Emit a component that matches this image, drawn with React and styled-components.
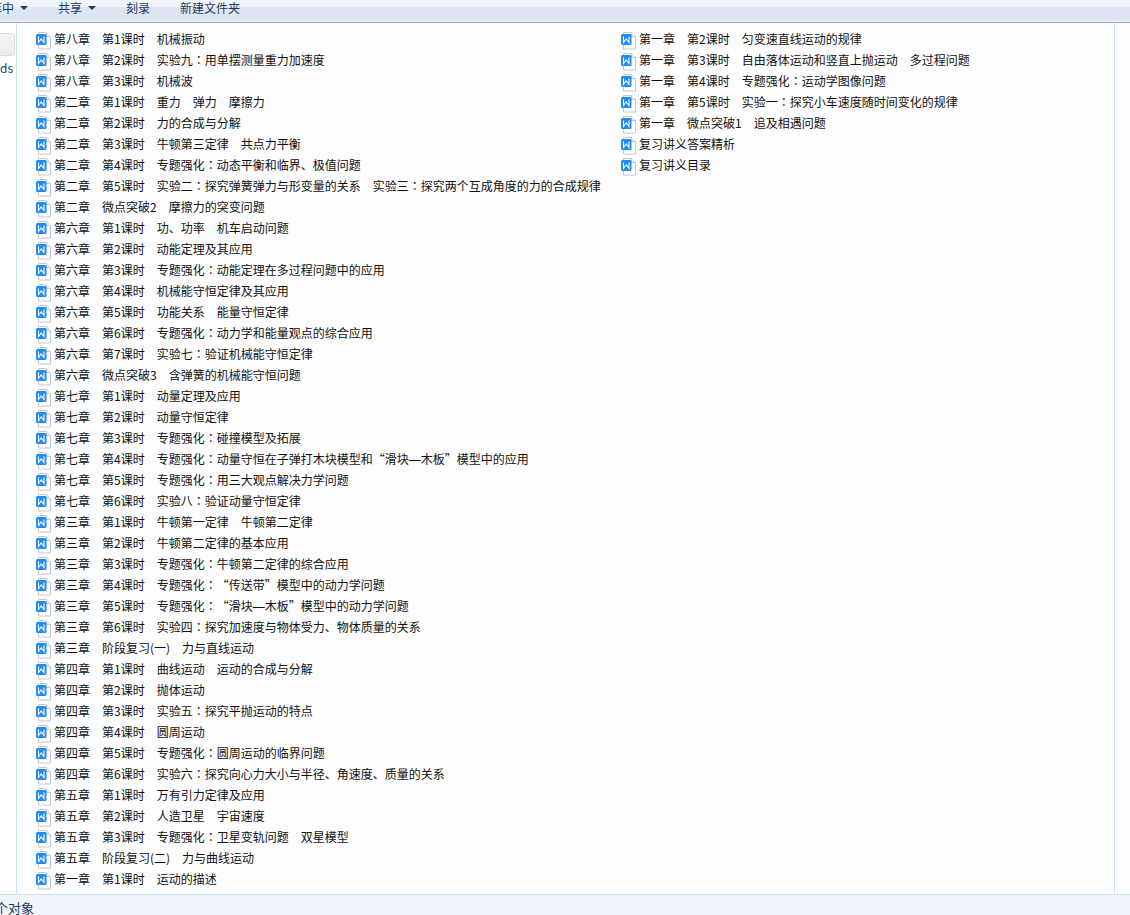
import styled, { createGlobalStyle } from "styled-components";

const GlobalStyle = createGlobalStyle`
  html, body {
    margin: 0;
    padding: 0;
    height: 100%;
    overflow: hidden;
    background: #fff;
    font-family: "Noto Sans CJK SC", "Liberation Sans", sans-serif;
  }
`;

const Window = styled.div`
  width: 1130px;
  height: 915px;
  display: flex;
  flex-direction: column;
  overflow: hidden;
  color: #111;
  font-size: 12px;
  text-spacing-trim: space-all;
`;

const Toolbar = styled.div`
  height: 23px;
  flex: none;
  display: flex;
  align-items: flex-start;
  padding-top: 1px;
  box-sizing: border-box;
  overflow: hidden;
  background: linear-gradient(#f1f6fc 0, #f1f6fc 7px, #dde6f2 7px, #dce6f2 20px, #e9f0f8 21px);
  border-bottom: 1px solid #a0aec2;
  color: #1e395b;
`;

const ToolItem = styled.div`
  display: flex;
  align-items: center;
  gap: 6px;
  height: 14px;
  line-height: 14px;
  white-space: nowrap;
  margin-left: ${(props) => props.$left}px;
`;

const Caret = styled.span`
  width: 0;
  height: 0;
  border-left: 4px solid transparent;
  border-right: 4px solid transparent;
  border-top: 4px solid #1e395b;
`;

const Body = styled.div`
  flex: 1;
  min-height: 0;
  display: flex;
  background: #fdfdfd;
`;

const Sidebar = styled.div`
  width: 16px;
  flex: none;
  display: flex;
  flex-direction: column;
  align-items: flex-end;
  padding-top: 10px;
  overflow: hidden;
  background: #fff;
  border-right: 1px solid #cfe2f6;
`;

const SideButton = styled.div`
  width: 30px;
  height: 23px;
  flex: none;
  margin-right: 1px;
  box-sizing: border-box;
  background: linear-gradient(#f4f4f4, #ececec);
  border: 1px solid #dcdcdc;
  border-radius: 3px;
`;

const SideLabel = styled.div`
  margin-top: 4px;
  line-height: 16px;
  white-space: nowrap;
  margin-right: 3px;
  color: #1e395b;
`;

const Content = styled.div`
  flex: 1;
  min-width: 0;
  display: grid;
  grid-auto-flow: column;
  grid-template-rows: repeat(41, 21px);
  grid-auto-columns: 585px;
  align-content: start;
  padding: 5px 0 0 19px;
`;

const FileRow = styled.div`
  display: flex;
  align-items: flex-start;
  gap: 3px;
  height: 21px;
  white-space: nowrap;
`;

const FileName = styled.span`
  line-height: 21px;
`;

const Colon = styled.span`
  font-family: "Noto Sans CJK TC", sans-serif;
`;

const Dash = styled.span`
  font-family: "Liberation Sans", sans-serif;
`;

const RightRail = styled.div`
  width: 15px;
  flex: none;
  background: #fdfdfd;
  border-left: 1px solid #cfe2f6;
`;

const StatusBar = styled.div`
  height: 20px;
  flex: none;
  display: flex;
  align-items: flex-start;
  overflow: hidden;
  background: #f1f5fc;
  border-top: 1px solid #d3deee;
  color: #1e395b;
  font-size: 13px;
`;

const StatusText = styled.span`
  margin: 3px 0 0 -5px;
  white-space: nowrap;
  line-height: 20px;
`;

const IconSvg = styled.svg`
  flex: none;
  margin-top: 4px;
`;

const WordIcon = () => (
  <IconSvg width="15" height="18" viewBox="0 0 15 18">
    <path d="M2.500.500h8l4 4v12.500h-12z" fill="#fff" stroke="#c2c8d2" />
    <path d="M10.500.500v4h4" fill="#f1f3f6" stroke="#c2c8d2" />
    <rect x="0" y="2" width="10.500" height="11" rx="1.500" fill="#1e8cf2" />
    <path d="M2.500 4.500v6l2.700-3.500 2.800 3.500v-6" fill="none" stroke="#fff" strokeWidth="1.100" />
  </IconSvg>
);

const files = [
  "第八章　第1课时　机械振动",
  "第八章　第2课时　实验九：用单摆测量重力加速度",
  "第八章　第3课时　机械波",
  "第二章　第1课时　重力　弹力　摩擦力",
  "第二章　第2课时　力的合成与分解",
  "第二章　第3课时　牛顿第三定律　共点力平衡",
  "第二章　第4课时　专题强化：动态平衡和临界、极值问题",
  "第二章　第5课时　实验二：探究弹簧弹力与形变量的关系　实验三：探究两个互成角度的力的合成规律",
  "第二章　微点突破2　摩擦力的突变问题",
  "第六章　第1课时　功、功率　机车启动问题",
  "第六章　第2课时　动能定理及其应用",
  "第六章　第3课时　专题强化：动能定理在多过程问题中的应用",
  "第六章　第4课时　机械能守恒定律及其应用",
  "第六章　第5课时　功能关系　能量守恒定律",
  "第六章　第6课时　专题强化：动力学和能量观点的综合应用",
  "第六章　第7课时　实验七：验证机械能守恒定律",
  "第六章　微点突破3　含弹簧的机械能守恒问题",
  "第七章　第1课时　动量定理及应用",
  "第七章　第2课时　动量守恒定律",
  "第七章　第3课时　专题强化：碰撞模型及拓展",
  "第七章　第4课时　专题强化：动量守恒在子弹打木块模型和“滑块—木板”模型中的应用",
  "第七章　第5课时　专题强化：用三大观点解决力学问题",
  "第七章　第6课时　实验八：验证动量守恒定律",
  "第三章　第1课时　牛顿第一定律　牛顿第二定律",
  "第三章　第2课时　牛顿第二定律的基本应用",
  "第三章　第3课时　专题强化：牛顿第二定律的综合应用",
  "第三章　第4课时　专题强化：“传送带”模型中的动力学问题",
  "第三章　第5课时　专题强化：“滑块—木板”模型中的动力学问题",
  "第三章　第6课时　实验四：探究加速度与物体受力、物体质量的关系",
  "第三章　阶段复习(一)　力与直线运动",
  "第四章　第1课时　曲线运动　运动的合成与分解",
  "第四章　第2课时　抛体运动",
  "第四章　第3课时　实验五：探究平抛运动的特点",
  "第四章　第4课时　圆周运动",
  "第四章　第5课时　专题强化：圆周运动的临界问题",
  "第四章　第6课时　实验六：探究向心力大小与半径、角速度、质量的关系",
  "第五章　第1课时　万有引力定律及应用",
  "第五章　第2课时　人造卫星　宇宙速度",
  "第五章　第3课时　专题强化：卫星变轨问题　双星模型",
  "第五章　阶段复习(二)　力与曲线运动",
  "第一章　第1课时　运动的描述",
  "第一章　第2课时　匀变速直线运动的规律",
  "第一章　第3课时　自由落体运动和竖直上抛运动　多过程问题",
  "第一章　第4课时　专题强化：运动学图像问题",
  "第一章　第5课时　实验一：探究小车速度随时间变化的规律",
  "第一章　微点突破1　追及相遇问题",
  "复习讲义答案精析",
  "复习讲义目录",
];

// the colon sits centred and the dash runs full width in the original
const renderName = (name) =>
  name.split(/([：—])/).map((part, i) => {
    if (part === "：") return <Colon key={i}>{part}</Colon>;
    if (part === "—") return <Dash key={i}>{part}</Dash>;
    return part;
  });

export default function App() {
  return (
    <Window>
      <GlobalStyle />
      <Toolbar>
        <ToolItem $left={-10}>
          库中
          <Caret />
        </ToolItem>
        <ToolItem $left={30}>
          共享
          <Caret />
        </ToolItem>
        <ToolItem $left={30}>刻录</ToolItem>
        <ToolItem $left={30}>新建文件夹</ToolItem>
      </Toolbar>
      <Body>
        <Sidebar>
          <SideButton />
          <SideLabel>ds</SideLabel>
        </Sidebar>
        <Content>
          {files.map((name) => (
            <FileRow key={name}>
              <WordIcon />
              <FileName>{renderName(name)}</FileName>
            </FileRow>
          ))}
        </Content>
        <RightRail />
      </Body>
      <StatusBar>
        <StatusText>个对象</StatusText>
      </StatusBar>
    </Window>
  );
}
